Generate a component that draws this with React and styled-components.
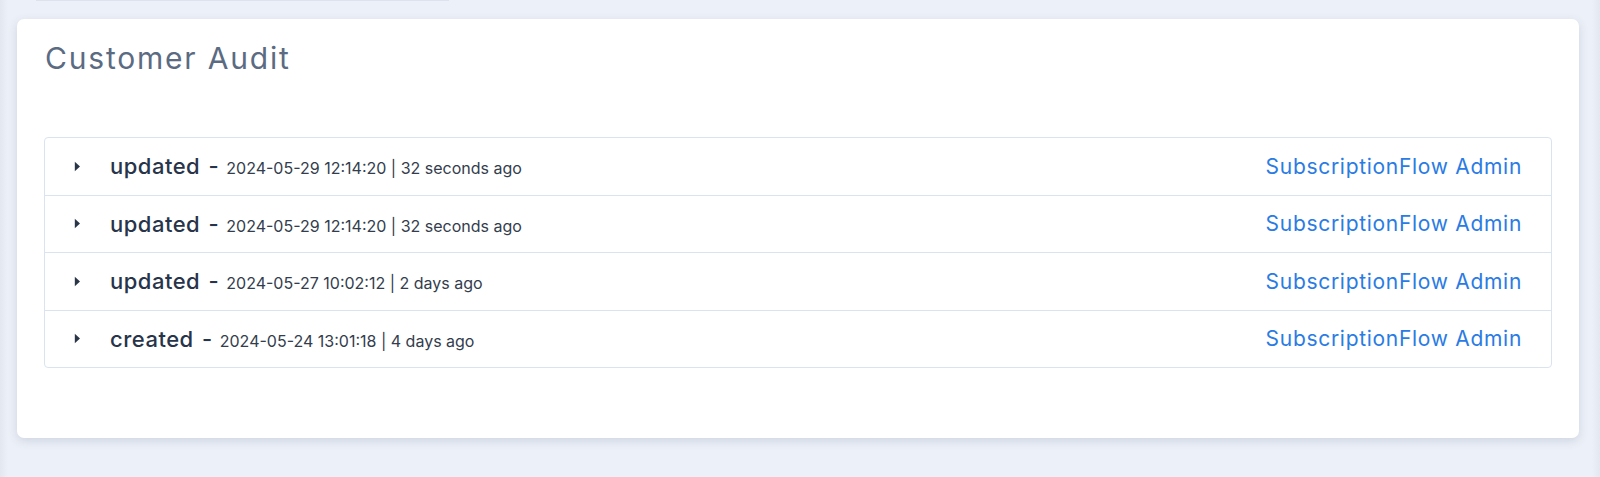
import React from "react";
import styled, { createGlobalStyle } from "styled-components";

const GlobalStyle = createGlobalStyle`
  html, body {
    margin: 0;
    padding: 0;
    background: #ecf0f8;
    font-family: Inter, "Noto Sans", sans-serif;
  }
`;

const audits = [
  { event: "updated", stamp: "2024-05-29 12:14:20", ago: "32 seconds ago", user: "SubscriptionFlow Admin" },
  { event: "updated", stamp: "2024-05-29 12:14:20", ago: "32 seconds ago", user: "SubscriptionFlow Admin" },
  { event: "updated", stamp: "2024-05-27 10:02:12", ago: "2 days ago", user: "SubscriptionFlow Admin" },
  { event: "created", stamp: "2024-05-24 13:01:18", ago: "4 days ago", user: "SubscriptionFlow Admin" },
];

function Caret() {
  return (
    <svg width="7" height="11" viewBox="0 0 7 11">
      <path d="M0.8 0.8 L6 5.5 L0.8 10.2 Z" fill="#2a3547" />
    </svg>
  );
}

function CustomerAudit() {
  return (
    <Page>
      <TopStrip />
      <Card>
        <Title>Customer Audit</Title>
        <AuditList>
          {audits.map((a, i) => (
            <AuditRow key={i}>
              <Toggle><Caret /></Toggle>
              <Summary>
                <Event>{a.event} -</Event>
                <Stamp>{a.stamp} | {a.ago}</Stamp>
              </Summary>
              <UserLink href="#">{a.user}</UserLink>
            </AuditRow>
          ))}
        </AuditList>
      </Card>
    </Page>
  );
}

export default function App() {
  return (
    <>
      <GlobalStyle />
      <CustomerAudit />
    </>
  );
}

const Page = styled.div`
  min-height: 477px;
  box-sizing: border-box;
  padding: 0 21px 0 17px;
  background: linear-gradient(to right, #e3e7f0 0, #ecf0f8 8px, #ecf0f8 calc(100% - 8px), #e3e7f0 100%);
`;

const TopStrip = styled.div`
  margin-left: 19px;
  width: 413px;
  height: 1px;
  background: #dde2ec;
`;

const Card = styled.div`
  margin-top: 18px;
  background: #ffffff;
  border-radius: 7px;
  box-shadow: 0 3px 10px rgba(70, 90, 120, 0.18);
  padding: 21px 27px 70px;
`;

const Title = styled.h2`
  margin: 0 0 61px 1px;
  font-size: 30px;
  line-height: 36px;
  font-weight: 400;
  color: #5b6b82;
  letter-spacing: 1.8px;
`;

const AuditList = styled.div`
  border: 1px solid #dae4f0;
  border-radius: 4px;
`;

const AuditRow = styled.div`
  display: flex;
  align-items: center;
  height: 56.5px;
  padding: 0 29px 0 29px;
  border-top: 1px solid #dae4f0;
  &:first-child {
    border-top: none;
  }
`;

const Toggle = styled.span`
  display: flex;
  width: 36px;
  align-items: center;
`;

const Summary = styled.div`
  flex: 1;
  display: flex;
  align-items: baseline;
  gap: 7px;
  color: #27344a;
`;

const Event = styled.span`
  font-size: 22px;
  font-weight: 500;
  letter-spacing: 0.5px;
  word-spacing: 2px;
`;

const Stamp = styled.span`
  font-size: 16px;
  color: #333d4d;
`;

const UserLink = styled.a`
  font-size: 21px;
  color: #2a7be4;
  letter-spacing: 0.7px;
  text-decoration: none;
`;
